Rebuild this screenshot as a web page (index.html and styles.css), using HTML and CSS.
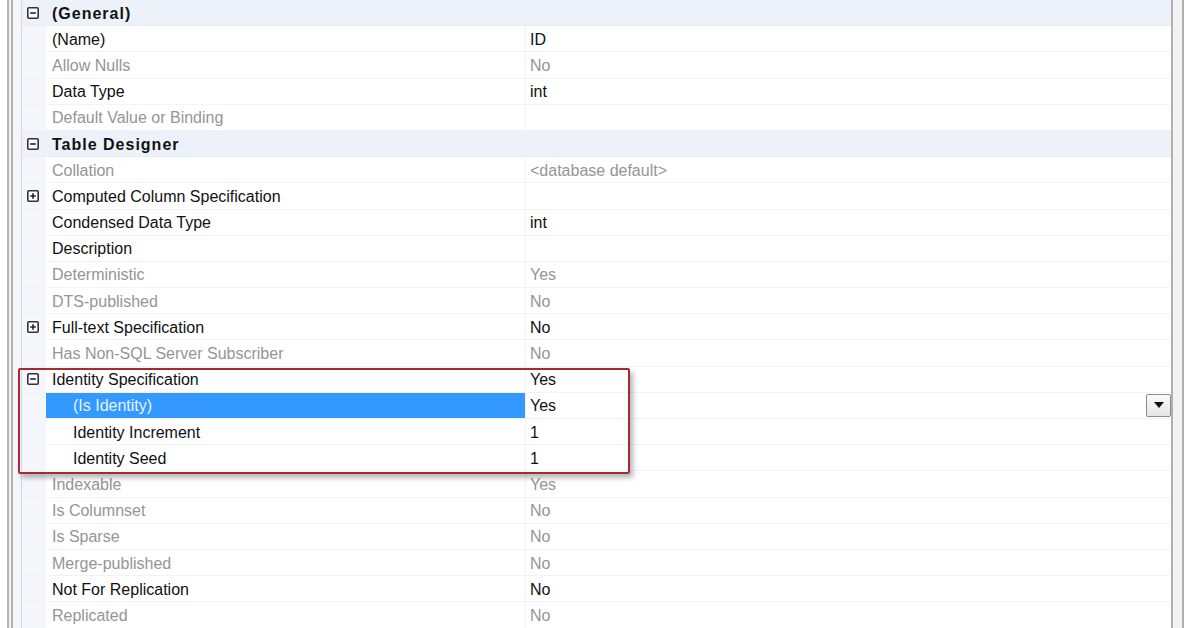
FILE: index.html
```html
<!DOCTYPE html>
<html>
<head>
<meta charset="utf-8">
<link rel="stylesheet" href="styles.css">
</head>
<body>
<div class="screen">
  <div class="edge-left"></div>
  <div class="grid">
    <div class="row cat"><div class="gut"><svg class="box" viewBox="0 0 12 12"><rect x="0.8" y="0.8" width="10.4" height="10.4" rx="1" fill="#fff" stroke="#333" stroke-width="1.6"/><path d="M3.2 6H8.8" stroke="#222" stroke-width="1.6"/></svg></div><div class="lbl">(General)</div><div class="val"></div></div>
    <div class="row"><div class="gut"></div><div class="lbl">(Name)</div><div class="val">ID</div></div>
    <div class="row ro"><div class="gut"></div><div class="lbl">Allow Nulls</div><div class="val">No</div></div>
    <div class="row"><div class="gut"></div><div class="lbl">Data Type</div><div class="val">int</div></div>
    <div class="row ro"><div class="gut"></div><div class="lbl">Default Value or Binding</div><div class="val"></div></div>
    <div class="row cat"><div class="gut"><svg class="box" viewBox="0 0 12 12"><rect x="0.8" y="0.8" width="10.4" height="10.4" rx="1" fill="#fff" stroke="#333" stroke-width="1.6"/><path d="M3.2 6H8.8" stroke="#222" stroke-width="1.6"/></svg></div><div class="lbl">Table Designer</div><div class="val"></div></div>
    <div class="row ro"><div class="gut"></div><div class="lbl">Collation</div><div class="val">&lt;database default&gt;</div></div>
    <div class="row"><div class="gut"><svg class="box" viewBox="0 0 12 12"><rect x="0.8" y="0.8" width="10.4" height="10.4" rx="1" fill="#fff" stroke="#333" stroke-width="1.6"/><path d="M3.2 6H8.8M6 3.2V8.8" stroke="#222" stroke-width="1.6"/></svg></div><div class="lbl">Computed Column Specification</div><div class="val"></div></div>
    <div class="row"><div class="gut"></div><div class="lbl">Condensed Data Type</div><div class="val">int</div></div>
    <div class="row"><div class="gut"></div><div class="lbl">Description</div><div class="val"></div></div>
    <div class="row ro"><div class="gut"></div><div class="lbl">Deterministic</div><div class="val">Yes</div></div>
    <div class="row ro"><div class="gut"></div><div class="lbl">DTS-published</div><div class="val">No</div></div>
    <div class="row"><div class="gut"><svg class="box" viewBox="0 0 12 12"><rect x="0.8" y="0.8" width="10.4" height="10.4" rx="1" fill="#fff" stroke="#333" stroke-width="1.6"/><path d="M3.2 6H8.8M6 3.2V8.8" stroke="#222" stroke-width="1.6"/></svg></div><div class="lbl">Full-text Specification</div><div class="val">No</div></div>
    <div class="row ro"><div class="gut"></div><div class="lbl">Has Non-SQL Server Subscriber</div><div class="val">No</div></div>
    <div class="row"><div class="gut"><svg class="box" viewBox="0 0 12 12"><rect x="0.8" y="0.8" width="10.4" height="10.4" rx="1" fill="#fff" stroke="#333" stroke-width="1.6"/><path d="M3.2 6H8.8" stroke="#222" stroke-width="1.6"/></svg></div><div class="lbl">Identity Specification</div><div class="val">Yes</div></div>
    <div class="row sel"><div class="gut"></div><div class="lbl sub">(Is Identity)</div><div class="val"><span>Yes</span><span class="drop"><svg viewBox="0 0 10 6" width="10" height="6"><path d="M0 0H10L5 6Z" fill="#111"/></svg></span></div></div>
    <div class="row"><div class="gut"></div><div class="lbl sub">Identity Increment</div><div class="val">1</div></div>
    <div class="row"><div class="gut"></div><div class="lbl sub">Identity Seed</div><div class="val">1</div></div>
    <div class="row ro"><div class="gut"></div><div class="lbl">Indexable</div><div class="val">Yes</div></div>
    <div class="row ro"><div class="gut"></div><div class="lbl">Is Columnset</div><div class="val">No</div></div>
    <div class="row ro"><div class="gut"></div><div class="lbl">Is Sparse</div><div class="val">No</div></div>
    <div class="row ro"><div class="gut"></div><div class="lbl">Merge-published</div><div class="val">No</div></div>
    <div class="row"><div class="gut"></div><div class="lbl">Not For Replication</div><div class="val">No</div></div>
    <div class="row ro"><div class="gut"></div><div class="lbl">Replicated</div><div class="val">No</div></div>
  </div>
  <div class="edge-right"></div>
  <div class="callout"></div>
</div>
</body>
</html>
```
FILE: styles.css
```css
html, body {
  margin: 0;
  padding: 0;
  background: #ffffff;
}
.screen {
  position: relative;
  display: flex;
  width: 1196px;
  height: 628px;
  overflow: hidden;
  font-family: "Liberation Sans", Arial, sans-serif;
  font-size: 16px;
  color: #111111;
}
.edge-left {
  width: 22px;
  flex: none;
  background: linear-gradient(to right,
    #ffffff 0 7px, #b4b4b4 7px 9px, #f2f2f2 9px 11px, #b4b4b4 11px 13px,
    #f5f6fa 13px 21px, #d6d8de 21px 22px);
}
.grid {
  width: 1149px;
  flex: none;
  display: flex;
  flex-direction: column;
  background: #ffffff;
}
.row {
  height: 26.2px;
  flex: none;
  display: grid;
  grid-template-columns: 24px 479px 1fr;
  box-sizing: border-box;
  border-bottom: 1px solid #f3f3f3;
}
.gut {
  background: #f5f6fb;
  display: flex;
  align-items: center;
  padding-left: 5px;
}
.box {
  width: 12px;
  height: 12px;
  display: block;
}
.lbl {
  display: flex;
  align-items: center;
  padding: 2px 0 0 6px;
  white-space: nowrap;
}
.lbl.sub {
  padding-left: 27px;
}
.val {
  display: flex;
  align-items: center;
  justify-content: space-between;
  padding: 2px 0 0 4px;
  border-left: 1px solid #f3f3f3;
  white-space: nowrap;
}
.row.cat {
  background: #edf1f9;
  border-bottom: 1px solid #e8ecf3;
}
.row.cat .gut {
  background: #edf1f9;
}
.row.cat .val {
  border-left-color: transparent;
}
.row.cat .lbl {
  font-weight: bold;
  letter-spacing: 1px;
}
.row.ro .lbl,
.row.ro .val {
  color: #959595;
}
.row.sel .lbl {
  background: #3399ff;
  color: #e8f2ff;
}
.row.sel .val {
  padding-top: 0;
}
.row.sel .val span:first-child {
  padding-top: 2px;
}
.drop {
  width: 25px;
  height: 23px;
  box-sizing: border-box;
  border: 1px solid #8c8c8c;
  border-radius: 2px;
  background: linear-gradient(#fafafa, #e6e6e6);
  display: flex;
  align-items: center;
  justify-content: center;
}
.edge-right {
  flex: 1;
  background: linear-gradient(to right,
    #b0b0b0 0 2px, #f3f3f3 2px 11px, #b0b0b0 11px 13px, #ffffff 13px);
}
.callout {
  position: absolute;
  left: 18px;
  top: 368px;
  width: 612px;
  height: 106px;
  box-sizing: border-box;
  border: 2px solid #a52a35;
  border-radius: 2px;
  box-shadow: 3px 4px 5px rgba(0, 0, 0, 0.28);
}
```
